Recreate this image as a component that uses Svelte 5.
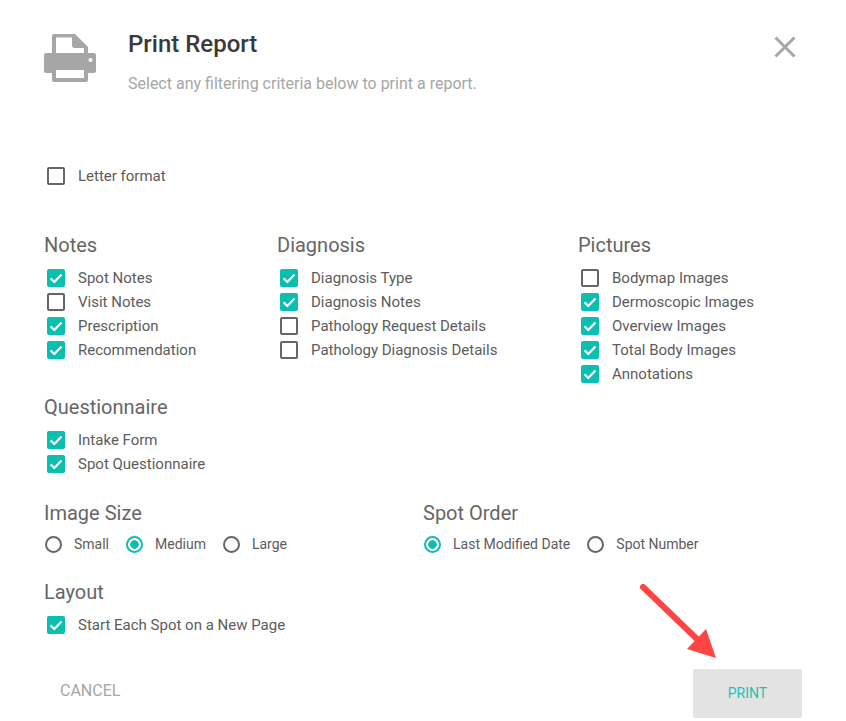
<script>
	const groups = [
		{
			title: "Notes",
			items: [
				["Spot Notes", true],
				["Visit Notes", false],
				["Prescription", true],
				["Recommendation", true],
			],
		},
		{
			title: "Diagnosis",
			items: [
				["Diagnosis Type", true],
				["Diagnosis Notes", true],
				["Pathology Request Details", false],
				["Pathology Diagnosis Details", false],
			],
		},
		{
			title: "Pictures",
			items: [
				["Bodymap Images", false],
				["Dermoscopic Images", true],
				["Overview Images", true],
				["Total Body Images", true],
				["Annotations", true],
			],
		},
	];
	const questionnaire = [
		["Intake Form", true],
		["Spot Questionnaire", true],
	];
	const sizes = [
		["Small", false],
		["Medium", true],
		["Large", false],
	];
	const orders = [
		["Last Modified Date", true],
		["Spot Number", false],
	];
</script>

{#snippet check(label, on)}
	<div class="check">
		<span class="box" class:on>
			{#if on}
				<svg viewBox="0 0 18 18" width="18" height="18"><path d="M3.600 9.400l3.700 3.600 7.200-7.500" fill="none" stroke="#fff" stroke-width="2.200" /></svg>
			{/if}
		</span>
		<span>{label}</span>
	</div>
{/snippet}

{#snippet radio(label, on)}
	<div class="radio">
		<span class="ring" class:on></span>
		<span>{label}</span>
	</div>
{/snippet}

<div class="dialog">
	<header>
		<svg class="printer" viewBox="0 0 52 48" width="52" height="48">
			<path fill="#a6a6a6" d="M10 0h21l13 13v8H8V2c0-1 1-2 2-2z" />
			<path fill="#fff" d="M12 3.500h16v8c0 1.500 1 2.500 2.500 2.500H40v5H12z" />
			<path fill="#a6a6a6" d="M2 19h48c1 0 2 1 2 2v16c0 1-1 2-2 2H2c-1 0-2-1-2-2V21c0-1 1-2 2-2z" />
			<path fill="#a6a6a6" d="M8 34h36v12c0 1-1 2-2 2H10c-1 0-2-1-2-2z" />
			<path fill="#fff" d="M12 36h28v8H12z" />
			<circle cx="46.500" cy="26" r="2" fill="#fff" />
		</svg>
		<div class="heading">
			<h1>Print Report</h1>
			<p>Select any filtering criteria below to print a report.</p>
		</div>
		<svg class="close" viewBox="0 0 24 24" width="24" height="24"><path d="M2.500 2.500l19 19M21.500 2.500l-19 19" stroke="#a6a6a6" stroke-width="3" fill="none" /></svg>
	</header>

	<div class="letter">{@render check("Letter format", false)}</div>

	<div class="columns">
		{#each groups as group}
			<section>
				<h2>{group.title}</h2>
				{#each group.items as [label, on]}
					{@render check(label, on)}
				{/each}
			</section>
		{/each}
	</div>

	<section class="questionnaire">
		<h2>Questionnaire</h2>
		{#each questionnaire as [label, on]}
			{@render check(label, on)}
		{/each}
	</section>

	<div class="options">
		<section>
			<h2>Image Size</h2>
			<div class="radios">
				{#each sizes as [label, on]}
					{@render radio(label, on)}
				{/each}
			</div>
		</section>
		<section>
			<h2>Spot Order</h2>
			<div class="radios">
				{#each orders as [label, on]}
					{@render radio(label, on)}
				{/each}
			</div>
		</section>
	</div>

	<section class="layout">
		<h2>Layout</h2>
		{@render check("Start Each Spot on a New Page", true)}
	</section>

	<footer>
		<button class="cancel">CANCEL</button>
		<button class="print">PRINT</button>
	</footer>

	<!-- annotation arrow drawn over the dialog -->
	<svg class="arrow" viewBox="0 0 846 721" width="846" height="721">
		<path d="M643 587L698 640" stroke="#ff4444" stroke-width="6" stroke-linecap="round" fill="none" />
		<path d="M716 658L706 629L687 649z" fill="#ff4444" />
	</svg>
</div>

<style>
	:global(body) {
		background: #fff;
	}

	.dialog {
		position: relative;
		width: 846px;
		height: 721px;
		box-sizing: border-box;
		padding: 34px 44px 0;
		font-family: Roboto, "Liberation Sans", sans-serif;
		color: #5c5c5c;
		overflow: hidden;
	}

	header {
		display: flex;
		align-items: flex-start;
		gap: 32px;
		height: 130px;
	}

	.printer {
		flex: none;
	}

	.heading {
		flex: 1;
	}

	h1 {
		margin: -4px 0 0;
		font-size: 24px;
		line-height: 28px;
		font-weight: 500;
		color: #3a3a3a;
	}

	.heading p {
		margin: 16px 0 0;
		font-size: 16px;
		line-height: 20px;
		color: #a6a6a6;
	}

	.close {
		flex: none;
		margin: 1px 5px 0 0;
	}

	.check {
		display: flex;
		align-items: center;
		height: 24px;
		font-size: 15px;
		gap: 13px;
		padding-left: 3px;
	}

	.box {
		box-sizing: border-box;
		width: 18px;
		height: 18px;
		border: 2px solid #666;
		border-radius: 2px;
		flex: none;
	}

	.box.on {
		border: none;
		background: #0abfb0;
	}

	.box svg {
		display: block;
	}

	.letter {
		height: 69px;
	}

	.columns {
		display: grid;
		grid-template-columns: 233px 301px 1fr;
		height: 162px;
	}

	h2 {
		margin: 0;
		font-size: 20px;
		line-height: 24px;
		font-weight: 400;
		color: #666;
		padding-bottom: 9px;
	}

	.questionnaire {
		height: 106px;
	}

	.options {
		display: grid;
		grid-template-columns: 379px 1fr;
		height: 79px;
	}

	.options h2 {
		padding-bottom: 7px;
	}

	.radios {
		display: flex;
		gap: 16px;
		height: 24px;
	}

	.radio {
		display: flex;
		align-items: center;
		gap: 12px;
		font-size: 14px;
		padding-left: 1px;
	}

	.ring {
		box-sizing: border-box;
		width: 17px;
		height: 17px;
		border: 2px solid #666;
		border-radius: 50%;
		flex: none;
	}

	.ring.on {
		border-color: #0abfb0;
		background: radial-gradient(circle, #0abfb0 0 4px, transparent 4.500px);
	}

	.layout {
		height: 89px;
	}

	footer {
		display: flex;
		justify-content: space-between;
		align-items: center;
		height: 49px;
	}

	button {
		border: none;
		background: none;
		font-family: inherit;
		padding: 0;
	}

	.cancel {
		margin-left: 16px;
		margin-top: -7px;
		font-size: 16px;
		color: #a6a6a6;
	}

	.print {
		width: 109px;
		height: 49px;
		padding-bottom: 1px;
		background: #e3e3e3;
		border-radius: 2px;
		font-size: 14px;
		color: #1cc4b6;
	}

	.arrow {
		position: absolute;
		left: 0;
		top: 0;
		pointer-events: none;
	}
</style>
